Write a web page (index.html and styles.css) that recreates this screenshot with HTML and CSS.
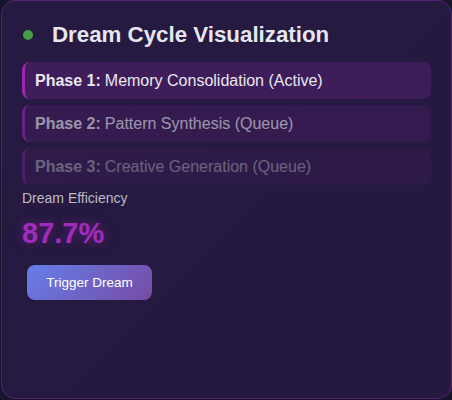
FILE: index.html
```html
<!DOCTYPE html>
<html>
<head>
<meta charset="utf-8">
<link rel="stylesheet" href="styles.css">
</head>
<body>
<div class="card">
  <h3 class="title"><span class="dot"></span>Dream Cycle Visualization</h3>
  <div class="phases">
    <div class="phase active"><strong>Phase 1:</strong> Memory Consolidation (Active)</div>
    <div class="phase queued"><strong>Phase 2:</strong> Pattern Synthesis (Queue)</div>
    <div class="phase later"><strong>Phase 3:</strong> Creative Generation (Queue)</div>
  </div>
  <div class="label">Dream Efficiency</div>
  <div class="value">87.7%</div>
  <button class="btn">Trigger Dream</button>
</div>
</body>
</html>
```
FILE: styles.css
```css
html, body {
  margin: 0;
  padding: 0;
  background: #17152b;
  font-family: "Liberation Sans", Arial, sans-serif;
}
.card {
  box-sizing: border-box;
  margin-left: 1px;
  width: 451px;
  height: 399px;
  border: 1px solid rgba(156, 39, 176, 0.45);
  border-radius: 15px;
  background: linear-gradient(135deg, #261a42 0%, #24193f 100%);
  padding: 20px 20px 20px 20px;
  color: #e8e8f0;
}
.title {
  display: flex;
  align-items: center;
  margin: 0 0 13px 0;
  font-size: 22.3px;
  font-weight: bold;
  color: #e6e6ee;
  height: 28px;
}
.dot {
  width: 10px;
  height: 10px;
  border-radius: 50%;
  background: #43a047;
  margin: 0 19px 0 1px;
}
.phases {
  display: flex;
  flex-direction: column;
  gap: 6px;
}
.phase {
  height: 37px;
  box-sizing: border-box;
  display: flex;
  align-items: center;
  padding-left: 10px;
  border-left: 3px solid #9c27b0;
  border-radius: 8px;
  background: rgba(156, 39, 176, 0.22);
  font-size: 16px;
  color: #e8e8f0;
}
.phase strong { margin-right: 4px; }
.phase.queued { opacity: 0.6; }
.phase.later { opacity: 0.35; }
.label {
  margin-top: 5px;
  font-size: 14px;
  color: #bdbac6;
}
.value {
  margin-top: 11px;
  font-size: 29px;
  font-weight: bold;
  color: #a12cbb;
  text-shadow: 0 0 10px rgba(156, 39, 176, 0.5);
}
.btn {
  margin: 15px 0 0 5px;
  width: 125px;
  height: 35px;
  border: none;
  border-radius: 8px;
  background: linear-gradient(135deg, #667eea 0%, #764ba2 100%);
  color: #fff;
  font-family: "Liberation Sans", Arial, sans-serif;
  font-size: 13.5px;
}
```
